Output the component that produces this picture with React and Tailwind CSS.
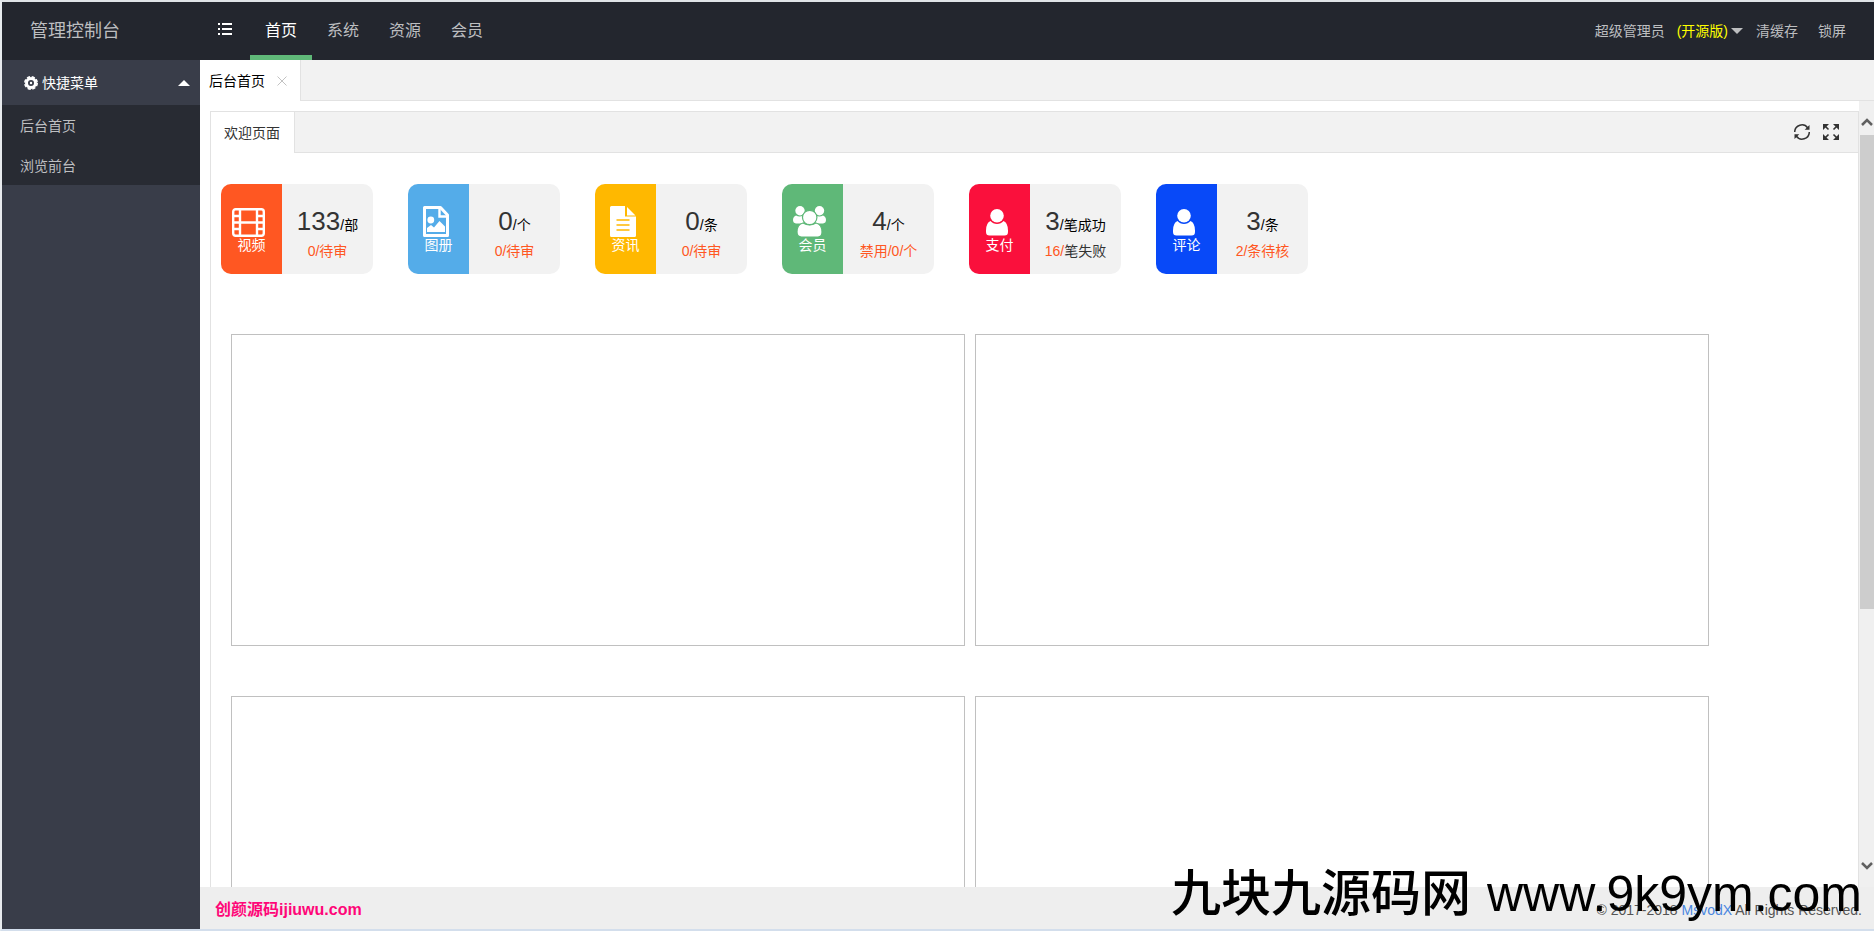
const NAV = ['首页', '系统', '资源', '会员'];

const SIDE_LINKS = ['后台首页', '浏览前台'];

const STATS = [
    { label: '视频', color: 'bg-[#ff5722]', icon: FilmIcon, value: '133', unit: '/部', note: '0/待审' },
    { label: '图册', color: 'bg-[#54ace9]', icon: PictureIcon, value: '0', unit: '/个', note: '0/待审' },
    { label: '资讯', color: 'bg-[#ffb800]', icon: ArticleIcon, value: '0', unit: '/条', note: '0/待审' },
    { label: '会员', color: 'bg-[#5fb878]', icon: GroupIcon, value: '4', unit: '/个', note: '禁用/0/个' },
    { label: '支付', color: 'bg-[#fa103c]', icon: UserIcon, value: '3', unit: '/笔成功', note: '16/', rest: '笔失败' },
    { label: '评论', color: 'bg-[#0849f8]', icon: UserIcon, value: '3', unit: '/条', note: '2/条待核' },
];

const CHARTS = ['a', 'b', 'c', 'd'];

function FilmIcon() {
    return (
        <svg width="33" height="30" viewBox="0 0 33 30" fill="none" stroke="currentColor" strokeWidth="2.400">
            <rect x="1.200" y="2.200" width="30.600" height="26.600" rx="2.500" />
            <path d="M8 2v27M25 2v27M8 15.500h17" />
            <path d="M1 9h7M1 15.500h7M1 22h7M25 9h7M25 15.500h7M25 22h7" />
        </svg>
    );
}

function PictureIcon() {
    return (
        <svg width="26" height="31" viewBox="0 0 26 31">
            <path d="M1.500 1.500h16L24.500 9v20.500h-23z" fill="none" stroke="currentColor" strokeWidth="3" strokeLinejoin="round" />
            <path d="M16.500 1v9.500H25" fill="none" stroke="currentColor" strokeWidth="2.400" />
            <circle cx="7.800" cy="14" r="3.400" fill="currentColor" />
            <path d="M4 26v-4l4-3 3 2.500L16.500 15l5.500 5.500V26z" fill="currentColor" />
        </svg>
    );
}

function ArticleIcon() {
    return (
        <svg width="26" height="31" viewBox="0 0 26 31">
            <path d="M0 1.500Q0 0 1.500 0H15v10.500h11v19q0 1.500-1.500 1.500h-23Q0 31 0 29.500z" fill="currentColor" />
            <path d="M17 1l8.500 8.500H17z" fill="currentColor" />
            <path d="M6.500 14h13M6.500 19h13M6.500 24h13" stroke="#ffb800" strokeWidth="1.700" />
        </svg>
    );
}

function GroupIcon() {
    return (
        <svg width="33" height="31" viewBox="0 0 33 31" fill="currentColor">
            <circle cx="7" cy="4.700" r="4.700" />
            <circle cx="26.500" cy="4.700" r="4.700" />
            <path d="M3 9.500q3.500 2 7.500 0v8H3q-3-.5-3-3.500 0-3.500 3-4.500z" />
            <path d="M30 9.500q-3.500 2-7.500 0v8H30q3-.5 3-3.500 0-3.500-3-4.500z" />
            <g stroke="#5fb878" strokeWidth="1.200">
                <path d="M10 17q6.500 4 13 0 6 1.500 6 9 0 5-4 5H8.500q-4.500 0-4.500-5 0-7.500 6-9z" />
                <circle cx="16.700" cy="11.500" r="7.200" />
            </g>
        </svg>
    );
}

function UserIcon() {
    return (
        <svg width="22" height="29" viewBox="0 0 22 29" fill="currentColor">
            <path d="M4.500 13q2.500 3 6.500 3t6.500-3Q22 15 22 22.500V24q0 3.500-3.500 3.500h-15Q0 27.500 0 24v-1.500Q0 15 4.500 13z" />
            <circle cx="11" cy="7.700" r="6.800" />
        </svg>
    );
}

function GearIcon() {
    return (
        <svg width="14" height="14" viewBox="0 0 14 14">
            <circle cx="7" cy="7" r="4.500" fill="none" stroke="currentColor" strokeWidth="3" />
            <circle cx="7" cy="7" r="6.200" fill="none" stroke="currentColor" strokeWidth="1.600" strokeDasharray="3.200 1.670" />
            <circle cx="7" cy="7" r="1.200" fill="currentColor" />
        </svg>
    );
}

function ListIcon() {
    return (
        <svg width="14" height="13" viewBox="0 0 14 13" fill="currentColor">
            <path d="M0 0h2v2H0zM4 0h10v2H4zM0 5h2v2H0zM4 5h10v2H4zM0 10h2v2H0zM4 10h10v2H4z" />
        </svg>
    );
}

function RefreshIcon() {
    return (
        <svg width="16" height="16" viewBox="0 0 16 16">
            <path d="M.700 8A7.200 7.200 0 0 1 13.800 4M15.300 8A7.200 7.200 0 0 1 2.200 12" fill="none" stroke="currentColor" strokeWidth="1.500" />
            <path d="M15.500 1v4.800h-4.800zM.500 15v-4.800h4.800z" fill="currentColor" />
        </svg>
    );
}

function ExpandIcon() {
    return (
        <svg width="16" height="16" viewBox="0 0 16 16">
            <path d="M0 0h6L0 6zM16 0v6l-6-6zM0 16v-6l6 6zM16 16h-6l6-6z" fill="currentColor" />
            <path d="M2 2l3.500 3.500M14 2l-3.500 3.500M2 14l3.500-3.500M14 14l-3.500-3.500" stroke="currentColor" strokeWidth="1.600" />
        </svg>
    );
}

function Header() {
    return (
        <header className="flex h-[58px] shrink-0 items-stretch bg-[#23262e] text-[#bdbec0]">
            <div className="flex w-[198px] items-center pl-7 text-lg">管理控制台</div>
            <button aria-label="收起菜单" className="flex w-[50px] items-center pb-1 pl-[18px] text-white">
                <ListIcon />
            </button>
            <nav className="flex text-base">
                {NAV.map((item, i) => (
                    <a
                        key={item}
                        href="#"
                        className={
                            i === 0
                                ? 'flex items-center border-b-[5px] border-[#5fb878] px-[15px] pt-[5px] text-white'
                                : 'flex items-center px-[15px]'
                        }
                    >
                        {item}
                    </a>
                ))}
            </nav>
            <div className="ml-auto flex items-center pr-7 text-sm">
                <a href="#" className="flex items-center">
                    超级管理员
                    <span className="ml-3 text-[#ffff00]">(开源版)</span>
                    <svg className="ml-[3px]" width="12" height="6" viewBox="0 0 12 6">
                        <path d="M0 0h12L6 6z" fill="currentColor" />
                    </svg>
                </a>
                <a href="#" className="ml-[13px]">清缓存</a>
                <a href="#" className="ml-5">锁屏</a>
            </div>
        </header>
    );
}

function Sidebar() {
    return (
        <aside className="w-[198px] shrink-0 bg-[#393d49] text-sm">
            <button className="flex h-[45px] w-full items-center pr-[10px] pl-[22px] text-white">
                <GearIcon />
                <span className="ml-1">快捷菜单</span>
                <svg className="ml-auto" width="12" height="6" viewBox="0 0 12 6">
                    <path d="M0 6h12L6 0z" fill="currentColor" />
                </svg>
            </button>
            <ul className="bg-[#282b33] text-[#bebfc1]">
                {SIDE_LINKS.map((link) => (
                    <li key={link}>
                        <a href="#" className="flex h-10 items-center pt-[2px] pl-[18px]">{link}</a>
                    </li>
                ))}
            </ul>
        </aside>
    );
}

function StatCard({ label, color, icon: Icon, value, unit, note, rest }) {
    return (
        <div className="flex h-[90px] w-[152px] overflow-hidden rounded-[10px] bg-[#f2f2f2]">
            <div className={`flex w-[61px] flex-col items-center pt-[21px] text-sm text-white ${color}`}>
                <div className="mr-[6px] flex h-8 items-end">
                    <Icon />
                </div>
                <div className="leading-4">{label}</div>
            </div>
            <div className="flex flex-1 flex-col items-center pt-[21px] whitespace-nowrap">
                <div className="flex items-baseline leading-8">
                    <span className="text-[26px] leading-8 text-[#333]">{value}</span>
                    <span className="text-sm leading-8 text-black">{unit}</span>
                </div>
                <div className="text-sm leading-5 text-[#ff5722]">
                    {note}
                    {rest && <span className="text-[#333]">{rest}</span>}
                </div>
            </div>
        </div>
    );
}

function ScrollBar() {
    return (
        <div className="flex w-[15px] shrink-0 flex-col items-center bg-[#f0f0f0] pt-4 pl-px text-[#606060]">
            <svg className="shrink-0" width="12" height="9" viewBox="0 0 12 9">
                <path d="M1 8l5-5 5 5" fill="none" stroke="currentColor" strokeWidth="2.500" />
            </svg>
            <div className="mt-[9px] h-8/13 w-full bg-[#cdcdcd]" />
            <svg className="mt-auto mb-4 shrink-0" width="12" height="9" viewBox="0 0 12 9">
                <path d="M1 1l5 5 5-5" fill="none" stroke="currentColor" strokeWidth="2.500" />
            </svg>
        </div>
    );
}

function Panel() {
    return (
        <section className="mt-[10px] ml-[10px] flex-1 border border-b-0 border-[#e2e2e2]">
            <div className="flex h-[41px] items-stretch border-b border-[#e2e2e2] bg-[#f2f2f2]">
                <div className="-mb-px flex items-center border-r border-[#e2e2e2] bg-white pr-[14px] pl-[13px] text-sm text-[#333]">
                    欢迎页面
                </div>
                <div className="ml-auto flex items-center gap-[13px] pr-[19px] text-[#333]">
                    <button aria-label="刷新"><RefreshIcon /></button>
                    <button aria-label="全屏"><ExpandIcon /></button>
                </div>
            </div>
            <div className="flex flex-wrap gap-[35px] px-[10px] pt-[31px]">
                {STATS.map((stat) => (
                    <StatCard key={stat.label} {...stat} />
                ))}
            </div>
            <div className="mt-[60px] mr-[149px] ml-5 grid grid-cols-2 gap-x-[10px] gap-y-[50px]">
                {CHARTS.map((id) => (
                    <div key={id} className="h-[312px] border border-[#c0c0c0]" />
                ))}
            </div>
        </section>
    );
}

export default function App() {
    return (
        <div className="relative flex h-screen flex-col overflow-hidden border-t-2 border-b-2 border-l-2 border-t-[#dfe3e6] border-b-[#d3deec] border-l-[#e8ebee] bg-white font-['Liberation_Sans','Noto_Sans_CJK_SC',sans-serif]">
            <Header />
            <div className="flex min-h-0 flex-1">
                <Sidebar />
                <main className="flex min-w-0 flex-1 flex-col">
                    <div className="flex h-[41px] shrink-0 border-b border-[#e2e2e2] bg-[#f2f2f2] text-sm">
                        <div className="-mb-px flex items-center border-r border-[#e2e2e2] bg-white pt-px pr-[13px] pl-[9px] text-black">
                            后台首页
                            <button aria-label="关闭" className="ml-3 text-[#c2c2c2]">
                                <svg width="10" height="10" viewBox="0 0 10 10">
                                    <path d="M.500 .500l9 9M9.500 .500l-9 9" stroke="currentColor" />
                                </svg>
                            </button>
                        </div>
                    </div>
                    <div className="flex min-h-0 flex-1 overflow-hidden">
                        <Panel />
                        <ScrollBar />
                    </div>
                    <footer className="flex h-[42px] shrink-0 items-center justify-between bg-[#eee] pt-[3px] pr-3 pl-[15px] text-sm">
                        <span className="text-base font-bold text-[#ff0678]">创颜源码ijiuwu.com</span>
                        <span className="text-[#555]">
                            © 2017-2018 <a href="#" className="text-[#4a86e0]">MsvodX</a> All Rights Reserved.
                        </span>
                    </footer>
                </main>
            </div>
            <div className="pointer-events-none absolute right-3 bottom-0 flex items-baseline gap-4 text-[50px] leading-[70px] whitespace-nowrap text-black">
                <span className="font-medium">九块九源码网</span>
                <span>www.9k9ym.com</span>
            </div>
        </div>
    );
}
